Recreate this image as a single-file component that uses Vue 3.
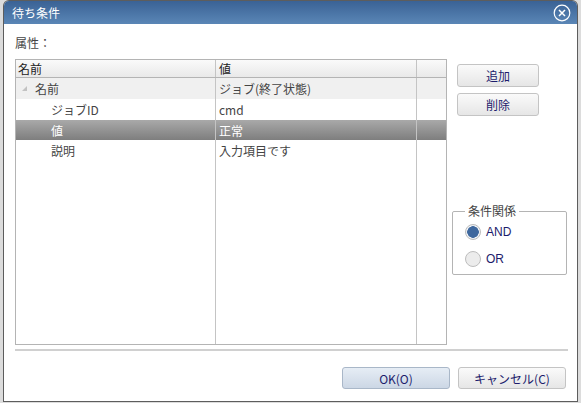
<script setup>
const rows = [
  { id: 1, name: '名前', value: 'ジョブ(終了状態)', kind: 'parent' },
  { id: 2, name: 'ジョブID', value: 'cmd', kind: 'child' },
  { id: 3, name: '値', value: '正常', kind: 'selected' },
  { id: 4, name: '説明', value: '入力項目です', kind: 'child' }
]
</script>

<template>
  <main class="page">
    <section class="dialog">
      <header class="title-bar">
        <h1 class="title">待ち条件</h1>
        <svg class="close-icon" width="18" height="18" viewBox="0 0 18 18">
          <circle cx="9" cy="9" r="7.8" fill="none" stroke="#fff" stroke-width="1.2" />
          <path d="M6 6l6 6M12 6l-6 6" stroke="#fff" stroke-width="1.5" fill="none" />
        </svg>
      </header>
      <div class="content">
        <p class="attr-label">属性：</p>
        <div class="main-row">
          <div class="grid">
            <div class="grid-head">
              <div class="cell col-name">名前</div>
              <div class="cell col-value">値</div>
              <div class="cell col-extra"></div>
            </div>
            <div class="grid-body">
              <div v-for="row in rows" :key="row.id" :class="['grid-row', `grid-row--${row.kind}`]">
                <div class="cell col-name">
                  <span v-if="row.kind === 'parent'" class="tree-arrow"></span>
                  {{ row.name }}
                </div>
                <div class="cell col-value">{{ row.value }}</div>
                <div class="cell col-extra"></div>
              </div>
              <div class="grid-filler">
                <div class="col-name"></div>
                <div class="col-value"></div>
                <div class="col-extra"></div>
              </div>
            </div>
          </div>
          <aside class="side">
            <div class="side-buttons">
              <button class="btn btn-side" type="button">追加</button>
              <button class="btn btn-side" type="button">削除</button>
            </div>
            <fieldset class="relation">
              <legend class="relation-legend">条件関係</legend>
              <label class="radio-row"><span class="radio radio--on"></span>AND</label>
              <label class="radio-row"><span class="radio"></span>OR</label>
            </fieldset>
          </aside>
        </div>
        <div class="separator"></div>
        <footer class="footer">
          <button class="btn btn-footer btn-primary" type="button">OK(O)</button>
          <button class="btn btn-footer" type="button">キャンセル(C)</button>
        </footer>
      </div>
    </section>
  </main>
</template>

<style scoped>
.page {
  width: 581px;
  height: 403px;
  box-sizing: border-box;
  padding: 1px 4px 2px 4px;
  background-color: #dcdcdc;
  font-family: "Noto Sans CJK JP", "Liberation Sans", sans-serif;
  overflow: hidden;
}
.dialog {
  display: flex;
  flex-direction: column;
  height: 100%;
  box-sizing: border-box;
  background-color: #fff;
  border-radius: 5px 5px 0 0;
  box-shadow: 0 0 0 1px #5d5d5d;
  clip-path: inset(-1px -1px -1px -1px);
}
.title-bar {
  display: flex;
  align-items: center;
  justify-content: space-between;
  height: 23px;
  flex: none;
  padding: 0 6px 0 8px;
  border-radius: 5px 5px 0 0;
  background: linear-gradient(#3a6295, #5a86b6);
}
.title {
  margin: 0;
  font-size: 12px;
  font-weight: 400;
  color: #fff;
}
.content {
  display: flex;
  flex-direction: column;
  flex: 1;
  padding: 0 9px 0 11px;
}
.attr-label {
  height: 35px;
  margin: 0;
  padding-top: 10px;
  box-sizing: border-box;
  font-size: 12px;
  line-height: 18px;
  color: #444;
}
.main-row {
  display: flex;
  height: 286px;
}
.grid {
  display: flex;
  flex-direction: column;
  width: 432px;
  flex: none;
  box-sizing: border-box;
  border: 1px solid #b4b4b4;
  font-size: 12px;
  color: #444;
}
.grid-head {
  display: flex;
  height: 18px;
  flex: none;
  color: #222;
  background: linear-gradient(#fafafa, #e9e9e9);
  border-bottom: 1px solid #b4b4b4;
  box-sizing: border-box;
}
.grid-body {
  display: flex;
  flex-direction: column;
  flex: 1;
}
.grid-row {
  display: flex;
  height: 21px;
  flex: none;
}
.grid-row--parent {
  background-color: #f0f0f0;
}
.grid-row--selected {
  height: 20px;
  color: #fff;
  background: linear-gradient(#a9a9a9, #7e7e7e);
}
.grid-filler {
  display: flex;
  flex: 1;
}
.cell {
  display: flex;
  align-items: center;
  box-sizing: border-box;
  white-space: nowrap;
}
.col-name {
  width: 200px;
  flex: none;
  box-sizing: border-box;
  padding-left: 2px;
  border-right: 1px solid #c4c4c4;
}
.col-value {
  width: 201px;
  flex: none;
  box-sizing: border-box;
  padding-left: 3px;
  border-right: 1px solid #c4c4c4;
}
.col-extra {
  flex: 1;
}
.grid-row--parent .col-name {
  padding-left: 6px;
}
.grid-row--child .col-name,
.grid-row--selected .col-name {
  padding-left: 35px;
}
.tree-arrow {
  width: 0;
  height: 0;
  margin-right: 8px;
  border-left: 5px solid transparent;
  border-bottom: 5px solid #c2c2c2;
}
.side {
  display: flex;
  flex-direction: column;
  justify-content: space-between;
  flex: 1;
  padding: 5px 0 70px 5px;
}
.side-buttons {
  display: flex;
  flex-direction: column;
  gap: 6px;
  padding-left: 5px;
}
.btn {
  box-sizing: border-box;
  padding: 0;
  font-family: inherit;
  font-size: 12px;
  color: #1c1c6c;
  border: 1px solid #c4c4c4;
  border-radius: 3px;
  background: linear-gradient(#fafafa, #e6e6e6);
}
.btn-side {
  width: 82px;
  height: 23px;
}
.relation {
  width: 115px;
  height: 71px;
  margin: 0;
  padding: 0 0 0 12px;
  box-sizing: border-box;
  border: 1px solid #b4b4b4;
  border-radius: 2px;
}
.relation-legend {
  margin-left: 0;
  padding: 0 3px;
  font-size: 12px;
  line-height: 14px;
  color: #444;
}
.radio-row {
  display: flex;
  align-items: center;
  gap: 5px;
  height: 27px;
  font-family: "Liberation Sans", sans-serif;
  font-size: 12px;
  color: #1c1c6c;
}
.radio {
  width: 16px;
  height: 16px;
  flex: none;
  box-sizing: border-box;
  border: 1px solid #bdbdbd;
  border-radius: 50%;
  background-color: #ececec;
}
.radio--on {
  background: radial-gradient(circle, #3f689e 0 5.5px, #eef1f5 6px);
}
.separator {
  width: 553px;
  height: 2px;
  flex: none;
  margin-top: 4px;
  background-color: #d0d0d0;
}
.footer {
  display: flex;
  justify-content: flex-end;
  gap: 8px;
  padding: 16px 2px 0 0;
}
.btn-footer {
  width: 108px;
  height: 22px;
}
.btn-primary {
  border-color: #a9b7c8;
  background: linear-gradient(#e6edf5, #ccd7e5);
}
</style>
